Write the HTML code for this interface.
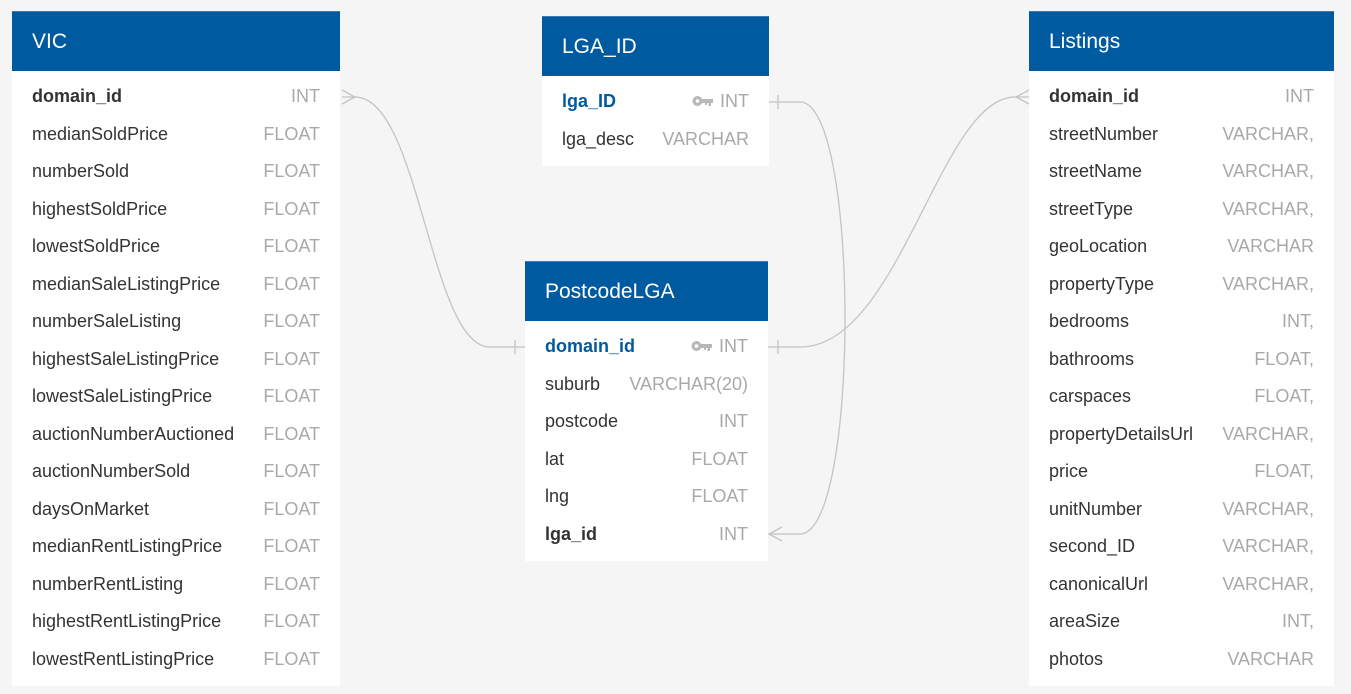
<!DOCTYPE html>
<html><head><meta charset="utf-8"><style>
body{margin:0;width:1351px;height:694px;background:#f4f5f4;font-family:"Liberation Sans",sans-serif;position:relative;overflow:hidden}
.t{position:absolute;background:#fff}
.h{background:#005a9f;color:#fff;font-size:21px;height:59px;line-height:60px;padding-left:20px;border-top:1px solid #3b7bb5}
.rows{padding-top:7px}
.r{height:37.5px;line-height:37.5px;font-size:18px;color:#333;display:flex;justify-content:space-between;padding:0 20px}
.r span:last-child{color:#a9a9a9}
.b{font-weight:bold}
.k{color:#005a9f;font-weight:bold}
.key{display:inline-block;vertical-align:middle;margin-right:6px;margin-top:-3px}
svg.l{position:absolute;left:0;top:0}
</style></head><body>
<svg class="l" width="1351" height="694" fill="none" stroke="#c4c4c4" stroke-width="1.3">
<path d="M342 97 H355 C420 97 430 347 490 347 H525"/>
<path d="M342 90 L355 97 L342 104"/>
<path d="M515 340 V354"/>
<path d="M769 102 H800 C860 102 860 534 800 534 H768"/>
<path d="M778 95 V109"/>
<path d="M782 527 L769 534 L782 541"/>
<path d="M1029 97 H1015 C940 97 900 347 800 347 H768"/>
<path d="M1029 90 L1016 97 L1029 104"/>
<path d="M778 340 V354"/>
</svg>
<div class="t" style="left:12px;top:11px;width:328px;height:675px">
<div class="h">VIC</div><div class="rows">
<div class="r"><span class="b">domain_id</span><span>INT</span></div>
<div class="r"><span>medianSoldPrice</span><span>FLOAT</span></div>
<div class="r"><span>numberSold</span><span>FLOAT</span></div>
<div class="r"><span>highestSoldPrice</span><span>FLOAT</span></div>
<div class="r"><span>lowestSoldPrice</span><span>FLOAT</span></div>
<div class="r"><span>medianSaleListingPrice</span><span>FLOAT</span></div>
<div class="r"><span>numberSaleListing</span><span>FLOAT</span></div>
<div class="r"><span>highestSaleListingPrice</span><span>FLOAT</span></div>
<div class="r"><span>lowestSaleListingPrice</span><span>FLOAT</span></div>
<div class="r"><span>auctionNumberAuctioned</span><span>FLOAT</span></div>
<div class="r"><span>auctionNumberSold</span><span>FLOAT</span></div>
<div class="r"><span>daysOnMarket</span><span>FLOAT</span></div>
<div class="r"><span>medianRentListingPrice</span><span>FLOAT</span></div>
<div class="r"><span>numberRentListing</span><span>FLOAT</span></div>
<div class="r"><span>highestRentListingPrice</span><span>FLOAT</span></div>
<div class="r"><span>lowestRentListingPrice</span><span>FLOAT</span></div>
</div></div>
<div class="t" style="left:542px;top:16px;width:227px;height:150px">
<div class="h">LGA_ID</div><div class="rows">
<div class="r"><span class="k">lga_ID</span><span><svg class="key" width="22" height="12" viewBox="0 0 22 12"><circle cx="5.5" cy="6" r="5" fill="#b8b8b8"/><circle cx="5.5" cy="6" r="1.8" fill="#fff"/><path d="M9 4h12v4h-2v3h-2.5v-3h-1.5v2h-2v-2h-4z" fill="#b8b8b8"/></svg>INT</span></div>
<div class="r"><span>lga_desc</span><span>VARCHAR</span></div>
</div></div>
<div class="t" style="left:525px;top:261px;width:243px;height:300px">
<div class="h">PostcodeLGA</div><div class="rows">
<div class="r"><span class="k">domain_id</span><span><svg class="key" width="22" height="12" viewBox="0 0 22 12"><circle cx="5.5" cy="6" r="5" fill="#b8b8b8"/><circle cx="5.5" cy="6" r="1.8" fill="#fff"/><path d="M9 4h12v4h-2v3h-2.5v-3h-1.5v2h-2v-2h-4z" fill="#b8b8b8"/></svg>INT</span></div>
<div class="r"><span>suburb</span><span>VARCHAR(20)</span></div>
<div class="r"><span>postcode</span><span>INT</span></div>
<div class="r"><span>lat</span><span>FLOAT</span></div>
<div class="r"><span>lng</span><span>FLOAT</span></div>
<div class="r"><span class="b">lga_id</span><span>INT</span></div>
</div></div>
<div class="t" style="left:1029px;top:11px;width:305px;height:675px">
<div class="h">Listings</div><div class="rows">
<div class="r"><span class="b">domain_id</span><span>INT</span></div>
<div class="r"><span>streetNumber</span><span>VARCHAR,</span></div>
<div class="r"><span>streetName</span><span>VARCHAR,</span></div>
<div class="r"><span>streetType</span><span>VARCHAR,</span></div>
<div class="r"><span>geoLocation</span><span>VARCHAR</span></div>
<div class="r"><span>propertyType</span><span>VARCHAR,</span></div>
<div class="r"><span>bedrooms</span><span>INT,</span></div>
<div class="r"><span>bathrooms</span><span>FLOAT,</span></div>
<div class="r"><span>carspaces</span><span>FLOAT,</span></div>
<div class="r"><span>propertyDetailsUrl</span><span>VARCHAR,</span></div>
<div class="r"><span>price</span><span>FLOAT,</span></div>
<div class="r"><span>unitNumber</span><span>VARCHAR,</span></div>
<div class="r"><span>second_ID</span><span>VARCHAR,</span></div>
<div class="r"><span>canonicalUrl</span><span>VARCHAR,</span></div>
<div class="r"><span>areaSize</span><span>INT,</span></div>
<div class="r"><span>photos</span><span>VARCHAR</span></div>
</div></div>
</body></html>
